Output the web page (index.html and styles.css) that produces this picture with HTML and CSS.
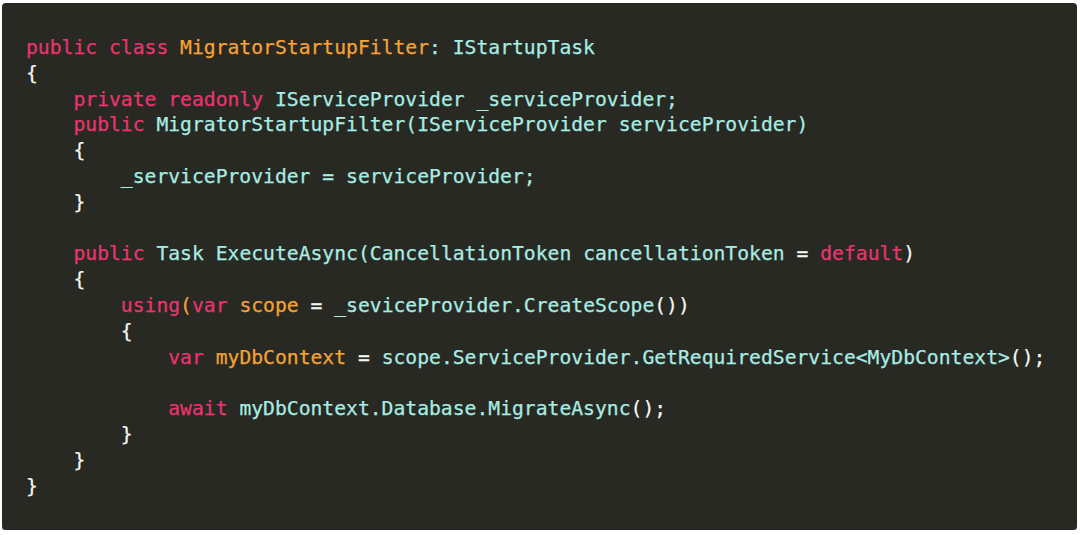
FILE: index.html
```html
<!DOCTYPE html>
<html>
<head>
<meta charset="utf-8">
<link rel="stylesheet" href="styles.css">
</head>
<body>
<div class="frame">
<pre class="code"><span class="k">public class</span> <span class="o">MigratorStartupFilter</span><span class="c">: IStartupTask</span>
<span class="w">{</span>
    <span class="k">private readonly</span> <span class="c">IServiceProvider _serviceProvider;</span>
    <span class="k">public</span> <span class="c">MigratorStartupFilter(IServiceProvider serviceProvider)</span>
    <span class="w">{</span>
        <span class="c">_serviceProvider = serviceProvider;</span>
    <span class="w">}</span>

    <span class="k">public</span> <span class="c">Task</span> <span class="c">ExecuteAsync(CancellationToken cancellationToken</span> <span class="w">=</span> <span class="k">default</span><span class="w">)</span>
    <span class="w">{</span>
        <span class="k">using</span><span class="o">(</span><span class="k">var</span> <span class="o">scope</span> <span class="w">=</span> <span class="c">_seviceProvider.CreateScope</span><span class="w">())</span>
        <span class="w">{</span>
            <span class="k">var</span> <span class="o">myDbContext</span> <span class="w">=</span> <span class="c">scope.ServiceProvider.GetRequiredService&lt;MyDbContext&gt;</span><span class="w">();</span>

            <span class="k">await</span> <span class="c">myDbContext.Database.MigrateAsync</span><span class="w">();</span>
        <span class="w">}</span>
    <span class="w">}</span>
<span class="w">}</span></pre>
</div>
</body>
</html>
```

FILE: styles.css
```css
html, body {
  margin: 0;
  padding: 0;
  background: #ffffff;
}

.frame {
  margin: 3px 3px 0 2px;
  height: 527px;
  box-sizing: border-box;
  background: #282923;
  border-radius: 4px;
  box-shadow: 0 2px 0 #b4b4b4;
  padding: 32px 0 0 24px;
  overflow: hidden;
}

.code {
  margin: 0;
  font-family: "DejaVu Sans Mono", monospace;
  font-size: 19.7px;
  line-height: 25.8px;
  color: #f6f6f0;
  white-space: pre;
  -webkit-text-stroke: 0.25px currentColor;
}

.k { color: #ea3470; }
.o { color: #f6a235; }
.c { color: #a8ece3; }
.w { color: #f6f6f0; }
```
